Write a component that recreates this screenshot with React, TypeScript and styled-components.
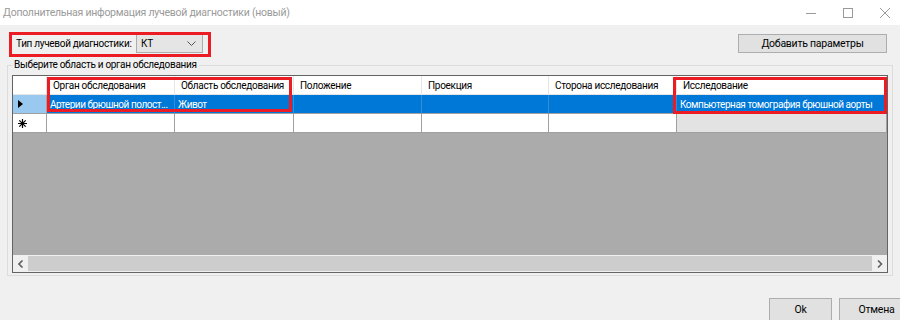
import React from "react";
import styled, { createGlobalStyle } from "styled-components";

const Global = createGlobalStyle`
  html, body { margin: 0; padding: 0; background: #f0f0f0; }
  * { box-sizing: border-box; }
`;

const FONT = `"Segoe UI", Roboto, "Noto Sans", sans-serif`;

const Window = styled.div`
  position: relative;
  width: 900px;
  height: 320px;
  overflow: hidden;
  background: #f0f0f0;
  font-family: ${FONT};
  font-size: 10px;
  letter-spacing: -0.3px;
  color: #000;
  display: flex;
  flex-direction: column;
`;

const TitleBar = styled.div`
  height: 25px;
  flex: none;
  background: #ffffff;
  display: flex;
  align-items: center;
  justify-content: space-between;
  padding-left: 3px;
`;

const Title = styled.span`
  color: #9a9a9a;
  font-size: 10.5px;
  letter-spacing: -0.25px;
  white-space: nowrap;
`;

const Controls = styled.div`
  display: flex;
  align-items: center;
  gap: 27px;
  padding-right: 10px;
`;

const ControlIcon = styled.svg`
  width: 10px;
  height: 10px;
  display: block;
`;

const Content = styled.div`
  padding: 0 7px;
  display: flex;
  flex-direction: column;
`;

const TopRow = styled.div`
  margin-top: 9px;
  height: 19px;
  display: flex;
  align-items: center;
  justify-content: space-between;
  padding: 0 6px 0 9px;
`;

const TypeField = styled.div`
  display: flex;
  align-items: center;
  height: 19px;
`;

const FieldLabel = styled.span`
  width: 120px;
  white-space: nowrap;
`;

const Combo = styled.div`
  width: 67px;
  height: 19px;
  border: 1px solid #adadad;
  background: #e5e5e5;
  display: flex;
  align-items: center;
  justify-content: space-between;
  padding: 0 6px 0 4px;
`;

const Button = styled.button<{ $w: number }>`
  width: ${(p) => p.$w}px;
  height: ${(p) => (p.$w > 100 ? 19 : 23)}px;
  border: 1px solid #adadad;
  background: #e1e1e1;
  font-family: ${FONT};
  font-size: 10.5px;
  letter-spacing: -0.25px;
  color: #000;
  padding: 0;
  display: flex;
  align-items: center;
  justify-content: center;
`;

const GroupBox = styled.fieldset`
  margin: 4px 0 0 0;
  padding: 2px 4px 2px 4px;
  border: 1px solid #dcdcdc;
  min-width: 0;
`;

const Legend = styled.legend`
  padding: 0 2px;
  margin: 0;
  line-height: 16px;
`;

const Grid = styled.div`
  height: 198px;
  border: 1px solid #646464;
  background: #ababab;
  display: flex;
  flex-direction: column;
`;

const COLS = "34px 128px 119px 128px 127px 128px 1fr";

const Row = styled.div`
  display: grid;
  grid-template-columns: ${COLS};
  height: 19px;
  flex: none;
`;

const HeaderCell = styled.div`
  background: #ffffff;
  border-right: 1px solid #e5e5e5;
  border-bottom: 1px solid #e5e5e5;
  padding-left: 6px;
  display: flex;
  align-items: center;
  white-space: nowrap;
  overflow: hidden;
`;

const RowHeader = styled.div<{ $selected?: boolean }>`
  background: ${(p) => (p.$selected ? "#99c9ef" : "#ffffff")};
  border-right: 1px solid #a0a0a0;
  border-bottom: 1px solid #a0a0a0;
  display: flex;
  align-items: center;
  padding-left: 5px;
`;

const Cell = styled.div<{ $selected?: boolean; $readonly?: boolean }>`
  background: ${(p) => (p.$selected ? "#0078d7" : p.$readonly ? "#e3e3e3" : "#ffffff")};
  color: ${(p) => (p.$selected ? "#ffffff" : "#000")};
  border-right: 1px solid ${(p) => (p.$selected ? "#2f8fdc" : "#a0a0a0")};
  border-bottom: 1px solid #a0a0a0;
  padding-left: 3px;
  letter-spacing: -0.45px;
  display: flex;
  align-items: center;
  white-space: nowrap;
  overflow: hidden;
`;

const Filler = styled.div`
  flex: 1;
`;

const ScrollBar = styled.div`
  height: 17px;
  flex: none;
  background: #f0f0f0;
  display: flex;
  align-items: stretch;
`;

const ScrollArrow = styled.div`
  width: 15px;
  display: flex;
  align-items: center;
  justify-content: center;
`;

const ScrollThumb = styled.div`
  flex: 1;
  margin: 1px 0 1px 0;
  background: #cdcdcd;
`;

const Footer = styled.div`
  display: flex;
  justify-content: flex-end;
  gap: 7px;
  margin-top: 22px;
  margin-right: -21px;
`;

const Highlight = styled.div<{ $x: number; $y: number; $w: number; $h: number }>`
  position: absolute;
  left: ${(p) => p.$x}px;
  top: ${(p) => p.$y}px;
  width: ${(p) => p.$w}px;
  height: ${(p) => p.$h}px;
  border: 3px solid #ec1c24;
  pointer-events: none;
`;

const Chevron = ({ dir }: { dir: "left" | "right" | "down" }) => {
  if (dir === "down")
    return (
      <svg width="9" height="5" viewBox="0 0 9 5">
        <path d="M0.5 0.5 L4.5 4.5 L8.5 0.5" fill="none" stroke="#555" strokeWidth="1" />
      </svg>
    );
  const d = dir === "left" ? "M4.5 0.5 L1 4 L4.5 7.5" : "M1 0.5 L4.5 4 L1 7.5";
  return (
    <svg width="6" height="8" viewBox="0 0 6 8">
      <path d={d} fill="none" stroke="#606060" strokeWidth="1.6" />
    </svg>
  );
};

const headers = [
  "Орган обследования",
  "Область обследования",
  "Положение",
  "Проекция",
  "Сторона исследования",
  "Исследование",
];

const values = [
  "Артерии брюшной полост...",
  "Живот",
  "",
  "",
  "",
  "Компьютерная томография брюшной аорты",
];

export default function App() {
  return (
    <Window>
      <Global />
      <TitleBar>
        <Title>Дополнительная информация лучевой диагностики (новый)</Title>
        <Controls>
          <ControlIcon viewBox="0 0 10 10">
            <path d="M0 5.5 H10" stroke="#9a9a9a" strokeWidth="1" />
          </ControlIcon>
          <ControlIcon viewBox="0 0 10 10">
            <rect x="0.5" y="0.5" width="9" height="9" fill="none" stroke="#9a9a9a" strokeWidth="1" />
          </ControlIcon>
          <ControlIcon viewBox="0 0 10 10">
            <path d="M0 0 L10 10 M10 0 L0 10" stroke="#9a9a9a" strokeWidth="1" />
          </ControlIcon>
        </Controls>
      </TitleBar>
      <Content>
        <TopRow>
          <TypeField>
            <FieldLabel>Тип лучевой диагностики:</FieldLabel>
            <Combo>
              <span>КТ</span>
              <Chevron dir="down" />
            </Combo>
          </TypeField>
          <Button $w={149}>Добавить параметры</Button>
        </TopRow>
        <GroupBox>
          <Legend>Выберите область и орган обследования</Legend>
          <Grid>
            <Row>
              <HeaderCell />
              {headers.map((h) => (
                <HeaderCell key={h}>{h}</HeaderCell>
              ))}
            </Row>
            <Row>
              <RowHeader $selected>
                <svg width="5" height="8" viewBox="0 0 5 8">
                  <path d="M0 0 L5 4 L0 8 Z" fill="#000" />
                </svg>
              </RowHeader>
              {values.map((v, i) => (
                <Cell key={i} $selected>
                  {v}
                </Cell>
              ))}
            </Row>
            <Row>
              <RowHeader>
                <svg width="9" height="9" viewBox="0 0 9 9">
                  <path
                    d="M4.5 0 V9 M0 4.5 H9 M1.3 1.3 L7.7 7.7 M7.7 1.3 L1.3 7.7"
                    stroke="#000"
                    strokeWidth="1.2"
                  />
                </svg>
              </RowHeader>
              {values.map((_, i) => (
                <Cell key={i} $readonly={i === 5} />
              ))}
            </Row>
            <Filler />
            <ScrollBar>
              <ScrollArrow>
                <Chevron dir="left" />
              </ScrollArrow>
              <ScrollThumb />
              <ScrollArrow>
                <Chevron dir="right" />
              </ScrollArrow>
            </ScrollBar>
          </Grid>
        </GroupBox>
        <Footer>
          <Button $w={63}>Ok</Button>
          <Button $w={75}>Отмена</Button>
        </Footer>
      </Content>
      <Highlight $x={9} $y={32} $w={202} $h={25} />
      <Highlight $x={47} $y={77} $w={245} $h={35} />
      <Highlight $x={673} $y={77} $w={214} $h={37} />
    </Window>
  );
}
